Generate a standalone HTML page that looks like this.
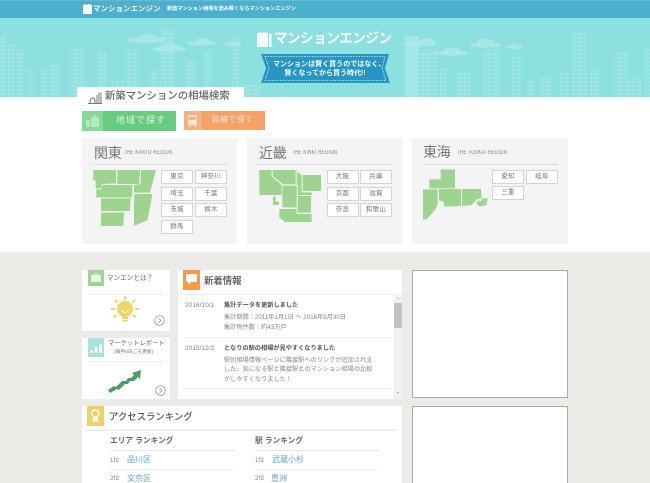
<!DOCTYPE html>
<html lang="ja"><head><meta charset="utf-8"><title>マンションエンジン</title>
<style>
html,body{margin:0;padding:0;background:#ecebe7;width:650px;height:483px;overflow:hidden}
body{position:relative;font-family:"Liberation Sans","Noto Sans CJK JP",sans-serif;color:#666}
#p{position:absolute;left:0;top:0;width:650px;height:483px;overflow:hidden;filter:blur(.3px)}
.a{position:absolute;white-space:nowrap}
.t{position:absolute;white-space:nowrap;line-height:1}
.panel{position:absolute;background:#f4f4f4;top:138px;height:106px;width:155px}
.pb{position:absolute;box-sizing:border-box;width:32px;height:14px;background:#fff;border:1px solid #d4d4d4;font-size:6.5px;line-height:12px;text-align:center;color:#777;letter-spacing:.3px}
.reg{position:absolute;font-size:14px;line-height:1;color:#777;white-space:nowrap;letter-spacing:-.2px}
.en{position:absolute;font-size:6px;line-height:1;color:#777;white-space:nowrap;letter-spacing:.75px;transform-origin:left top;transform:scaleX(.68)}
.dot{position:absolute;height:0;border-top:1px dotted #ccc}
.card{position:absolute;background:#fff}
.ln{position:absolute;height:1px;background:#eee}
.n{font-size:6.2px;color:#888}
.nb{font-size:6.2px;color:#555;font-weight:bold}
.r{font-size:8px;color:#5ea9c6}
.o{font-size:6px;color:#888}
.h{font-size:7.7px;font-weight:bold;color:#666}
</style></head><body><div id="p">
<div class="a" style="left:0;top:0;width:650px;height:18px;background:#4bafce;border-top:1px solid #69b7d0;box-sizing:border-box"></div>
<svg class="a" style="left:83px;top:4px" width="9" height="10" viewBox="0 0 9 10"><path d="M0 1l3-1 1 1 2-1 3 1v9H0z" fill="#fff"/></svg>
<div class="t" style="left:93px;top:4.5px;font-size:7.5px;font-weight:bold;color:#fff">マンションエンジン</div>
<div class="t" style="left:167px;top:6.5px;font-size:5.16px;font-weight:bold;color:#fff">新築マンション相場を読み解くならマンションエンジン</div>

<div class="a" style="left:0;top:18px;width:650px;height:79px;background:#8de0e0"></div>
<svg class="a" style="left:0;top:18px" width="650" height="79" viewBox="0 18 650 79">
<defs><pattern id="w" width="6" height="4" patternUnits="userSpaceOnUse"><rect width="6" height="4" fill="#93e2e2"/><rect x="1" y="1" width="4" height="2" fill="#9fe6e5"/></pattern></defs>
<g fill="url(#w)">
<rect x="0" y="36" width="6" height="61"/><rect x="8" y="44" width="7" height="53"/><rect x="16" y="50" width="9" height="47"/><rect x="27" y="68" width="6" height="29"/><rect x="40" y="70" width="8" height="27"/><rect x="50" y="65" width="11" height="32"/><rect x="70" y="47" width="15" height="50"/><rect x="98" y="52" width="8" height="45"/><rect x="112" y="80" width="12" height="17"/><rect x="126" y="50" width="12" height="47"/><rect x="150" y="70" width="8" height="27"/><rect x="160" y="30" width="14" height="67"/><rect x="186" y="60" width="9" height="37"/><rect x="203" y="50" width="9" height="47"/><rect x="232" y="37" width="8" height="60"/><rect x="244" y="85" width="16" height="12"/>
<rect x="405" y="36" width="14" height="61"/><rect x="420" y="50" width="17" height="47"/><rect x="440" y="68" width="7" height="29"/><rect x="455" y="72" width="16" height="25"/><rect x="483" y="50" width="17" height="47"/><rect x="512" y="55" width="9" height="42"/><rect x="527" y="80" width="8" height="17"/><rect x="540" y="78" width="13" height="19"/><rect x="560" y="72" width="9" height="25"/><rect x="572" y="32" width="15" height="65"/><rect x="590" y="70" width="10" height="27"/><rect x="615" y="52" width="13" height="45"/><rect x="628" y="78" width="14" height="19"/><rect x="645" y="47" width="5" height="50"/>
</g>
<g fill="#aee9e9" opacity=".85">
<ellipse cx="146" cy="40" rx="20" ry="3"/><ellipse cx="148" cy="37.500" rx="8" ry="3.500"/>
<ellipse cx="169" cy="49" rx="17" ry="3"/><ellipse cx="170" cy="47" rx="8" ry="3.500"/>
<ellipse cx="202" cy="43" rx="15" ry="2.500"/><ellipse cx="203" cy="41" rx="7" ry="3"/>
<ellipse cx="233" cy="44" rx="9" ry="1.800"/><ellipse cx="233" cy="43" rx="4" ry="2"/>
<ellipse cx="420" cy="44" rx="17" ry="2.500"/><ellipse cx="427" cy="42" rx="8" ry="4"/>
<ellipse cx="451" cy="53" rx="17" ry="2.500"/><ellipse cx="452" cy="51" rx="8" ry="3.500"/>
<ellipse cx="485" cy="45" rx="16" ry="2.500"/><ellipse cx="486" cy="43" rx="9" ry="4"/>
<ellipse cx="514" cy="47" rx="9" ry="1.800"/><ellipse cx="514" cy="46" rx="4" ry="2"/>
</g>
<rect x="405" y="36" width="14" height="61" fill="#c0eeee" opacity=".3"/>
</svg>

<svg class="a" style="left:257px;top:32px" width="15" height="15" viewBox="0 0 15 15"><path d="M0 1.500l3-1.200 2 .7 2.500-1 2.500 1 1.500-.5v1.500H14.500V15H0z" fill="#f4fbfb"/><rect x="11" y="2" width="1" height="13" fill="#8de0e0"/></svg>
<div class="t" style="left:274px;top:31px;font-size:14px;font-weight:bold;color:#fff;letter-spacing:-.55px;transform-origin:left top;transform:scaleX(.97)">マンションエンジン</div>

<svg class="a" style="left:260px;top:54px" width="130" height="30" viewBox="0 0 130 30"><path d="M1 0H129l-4 14 5 15H1l5-15z" fill="#2696c6"/><path d="M5 2.500H125l-3 11.500 4 12.500H5l4-12.500z" fill="none" stroke="#dff3f8" stroke-width=".8" stroke-dasharray="1.400 1.200"/></svg>
<div class="t" style="left:273px;top:60.5px;font-size:7px;font-weight:bold;color:#fff;letter-spacing:.02px;width:104px;text-align:center">マンションは賢く買うのではなく、</div>
<div class="t" style="left:273px;top:69.5px;font-size:7px;font-weight:bold;color:#fff;width:104px;text-align:center">賢くなってから買う時代!!</div>

<div class="a" style="left:0;top:97px;width:650px;height:155px;background:#fff"></div>
<div class="a" style="left:77px;top:87px;width:167px;height:12px;background:#fff"></div>
<svg class="a" style="left:88px;top:91px" width="14" height="13" viewBox="0 0 14 13" fill="none" stroke="#777" stroke-width="1"><path d="M0 12.500h14M2 12c0-3 1-5 3-5s2 2 2 5M9 12V4M11 12V1.500M13 12V1.500"/></svg>
<div class="t" style="left:105px;top:91.5px;font-size:10.4px;color:#666;font-weight:500">新築マンションの相場検索</div>

<div class="a" style="left:82px;top:111px;width:94px;height:20px;background:#66cc7e"></div>
<div class="a" style="left:82px;top:111px;width:21px;height:20px;background:#86d898"></div>
<svg class="a" style="left:86px;top:115px" width="13" height="12" viewBox="0 0 13 12" fill="#b5e9bd"><path d="M0 5h4v7H0zM5 2h3V0h2v2h3v10H5z"/></svg>
<div class="t" style="left:116px;top:116px;font-size:9px;color:#e2f6e5;letter-spacing:1px">地域で探す</div>
<div class="a" style="left:184px;top:111px;width:81px;height:18.5px;background:#f5a368"></div>
<div class="a" style="left:184px;top:111px;width:18px;height:18.5px;background:#f7b080"></div>
<svg class="a" style="left:188px;top:114.5px" width="9" height="12" viewBox="0 0 9 12" fill="#fde6d2"><path d="M1 0h7a1 1 0 0 1 1 1v8a1 1 0 0 1-1 1H1a1 1 0 0 1-1-1V1a1 1 0 0 1 1-1zM1 2v3h7V2zM1.500 10h1.500L2 12H1zM6 10h1.500L8 12H7z"/></svg>
<div class="t" style="left:212px;top:116px;font-size:7.7px;color:#fbe3d0;letter-spacing:.6px">路線で探す</div>

<div class="panel" style="left:82px"></div>
<div class="panel" style="left:247px"></div>
<div class="panel" style="left:412px;width:156px"></div>
<div class="reg" style="left:94px;top:145.500px">関東</div>
<div class="en" style="left:124px;top:150px">THE KANTO REGION</div>
<div class="dot" style="left:92px;top:164px;width:135px"></div>
<div class="reg" style="left:259px;top:145.500px">近畿</div>
<div class="en" style="left:292px;top:150px">THE KINKI REGION</div>
<div class="dot" style="left:257px;top:164px;width:135px"></div>
<div class="reg" style="left:423px;top:145px">東海</div>
<div class="en" style="left:457px;top:149.500px">THE TOUKAI REGION</div>
<div class="dot" style="left:423px;top:163.500px;width:134px"></div>

<div class="pb" style="left:161px;top:170px">東京</div><div class="pb" style="left:195px;top:170px">神奈川</div>
<div class="pb" style="left:161px;top:186.500px">埼玉</div><div class="pb" style="left:195px;top:186.500px">千葉</div>
<div class="pb" style="left:161px;top:203px">茨城</div><div class="pb" style="left:195px;top:203px">栃木</div>
<div class="pb" style="left:161px;top:219.500px">群馬</div>
<div class="pb" style="left:326.500px;top:170px">大阪</div><div class="pb" style="left:360px;top:170px">兵庫</div>
<div class="pb" style="left:326.500px;top:186.500px">京都</div><div class="pb" style="left:360px;top:186.500px">滋賀</div>
<div class="pb" style="left:326.500px;top:203px">奈良</div><div class="pb" style="left:360px;top:203px">和歌山</div>
<div class="pb" style="left:492px;top:169.500px">愛知</div><div class="pb" style="left:526px;top:169.500px">岐阜</div>
<div class="pb" style="left:492px;top:186px">三重</div>

<svg class="a" style="left:0;top:0;pointer-events:none" width="650" height="260" viewBox="0 0 650 260">
<g fill="#9dd48f" transform="translate(75 130) scale(.33333)">
<path d="M55 120H123V160L80 162V175H62V152H55z"/><path d="M127 120H195L193 162H127z"/><path d="M198 120H243L225 188H177V165L197 162z"/><path d="M64 178H80L83 165H172V202H64z"/><path d="M78 205H167L165 243H78z"/><path d="M178 192H232L218 270L177 288V225z"/><path d="M78 248L147 247L145 288L78 288z"/>
<path d="M553 120H590V140L620 165V195H553z"/><path d="M593 120H662V163H625L593 138z"/><path d="M683 135H738V183H683z"/><path d="M665 122V165H668V195H710V187H680V135L662 122z"/><path d="M622 167H665V232H622z"/><path d="M668 198H708V248H668z"/><path d="M613 237H665V252H710V276H630L613 262z"/><path d="M594 200H602V215H612V225H594z"/>
</g>
<g fill="#9dd48f" transform="translate(325 130) scale(.33333)">
<path d="M347 118H390V175H313V148H347z"/><path d="M294 178H338V222L330 240L305 268H294z"/><path d="M342 177H408V228L358 230L355 215L342 212z"/><path d="M411 177H468L470 205L455 208L440 225L411 228z"/><path d="M470 205H488L485 225L465 230L455 222L458 212L470 213z"/>
</g>
</svg>

<div class="card" style="left:82px;top:270px;width:88px;height:61px"></div>
<div class="a" style="left:88px;top:270px;width:16px;height:16px;background:#9dd48f"></div>
<svg class="a" style="left:91px;top:273px" width="10" height="10" viewBox="0 0 10 10" fill="#e9f7e5"><path d="M3 2V.5h4V2h3v7H0V2zM4 1.300V2h2v-.7z"/></svg>
<div class="t" style="left:107px;top:275.500px;font-size:6.6px;color:#666">マンエンとは？</div>
<div class="ln" style="left:87px;top:294px;width:77px"></div>
<svg class="a" style="left:110px;top:296px" width="30" height="29" viewBox="0 0 30 29"><g stroke="#f2d366" stroke-width="2" stroke-linecap="round"><path d="M15 1v2M5.500 4.500l1.500 1.500M24.500 4.500L23 6M1.500 13h2.500M26 13h2.500M4.500 21l1.500-1.500M25 21l-1.500-1.500"/></g><circle cx="15" cy="13" r="8" fill="#f2d366"/><path d="M11 14l4 3 4-3" stroke="#fff" fill="none" stroke-width="1"/><rect x="12" y="21" width="6" height="2" fill="#f2d366"/><rect x="12.500" y="24" width="5" height="1.500" fill="#f2d366"/></svg>
<svg class="a" style="left:154px;top:315px" width="11" height="11" viewBox="0 0 11 11" fill="none" stroke="#888"><circle cx="5.500" cy="5.500" r="4.800" stroke-width=".7"/><path d="M4.500 3l2.500 2.500L4.500 8" stroke-width=".7"/></svg>

<div class="card" style="left:82px;top:338px;width:88px;height:61px"></div>
<div class="a" style="left:88px;top:338px;width:16px;height:19px;background:#a5e2dc"></div>
<svg class="a" style="left:90px;top:342px" width="12" height="12" viewBox="0 0 12 12" fill="#f0fbfa"><path d="M0 8h3v3H0zM4.500 5h3v6h-3zM9 2h3v9H9z"/></svg>
<div class="t" style="left:108px;top:341px;font-size:6.3px;color:#666">マーケットレポート</div>
<div class="t" style="left:114px;top:351px;font-size:4.800px;color:#777">(毎月6日ごろ更新)</div>
<div class="ln" style="left:87px;top:361px;width:77px"></div>
<svg class="a" style="left:107px;top:368px" width="34" height="26" viewBox="0 0 34 26"><path d="M1 22l6-4 2 1 6-6h4l2-3h3l3-3-2-2 9-3-1 9-2-2-4 4h-4l-2 3h-3l-6 6-2-1-7 4z" fill="#4e9c67"/></svg>
<svg class="a" style="left:155px;top:385px" width="11" height="11" viewBox="0 0 11 11" fill="none" stroke="#888"><circle cx="5.500" cy="5.500" r="4.800" stroke-width=".7"/><path d="M4.500 3l2.500 2.500L4.500 8" stroke-width=".7"/></svg>

<div class="card" style="left:178px;top:270px;width:224px;height:129px"></div>
<div class="a" style="left:183px;top:270px;width:17px;height:20px;background:#f59b48"></div>
<svg class="a" style="left:186px;top:274px" width="11" height="11" viewBox="0 0 11 11" fill="#fff"><path d="M1 0h9a1 1 0 0 1 1 1v6a1 1 0 0 1-1 1H5L2.500 10.500V8H1a1 1 0 0 1-1-1V1a1 1 0 0 1 1-1z"/></svg>
<div class="t" style="left:204px;top:276px;font-size:9.4px;font-weight:bold;color:#666">新着情報</div>
<div class="ln" style="left:183px;top:294px;width:215px"></div>
<div class="t" style="left:185px;top:303px;font-size:6.6px;color:#888">2016/10/1</div>
<div class="t nb" style="left:224px;top:303px">集計データを更新しました</div>
<div class="t n" style="left:224px;top:314.500px">集計期間：2011年1月1日 ～ 2016年9月30日</div>
<div class="t n" style="left:224px;top:324.500px">集計物件数：約43万戸</div>
<div class="ln" style="left:183px;top:337px;width:208px"></div>
<div class="t" style="left:185px;top:345.500px;font-size:6.6px;color:#888">2015/12/2</div>
<div class="t nb" style="left:224px;top:345.500px">となりの駅の相場が見やすくなりました</div>
<div class="t n" style="left:224px;top:357.500px">駅別相場情報ページに隣接駅へのリンクが追加されま</div>
<div class="t n" style="left:224px;top:367px">した。気になる駅と隣接駅とのマンション相場の比較</div>
<div class="t n" style="left:224px;top:376.500px">がしやすくなりました！</div>
<div class="ln" style="left:183px;top:388px;width:208px"></div>
<div class="a" style="left:394px;top:294px;width:8px;height:105px;background:#f1f1f1"></div>
<div class="a" style="left:394px;top:303px;width:8px;height:25px;background:#c1c1c1"></div>
<div class="a" style="left:396.500px;top:298px;width:0;height:0;border:1.500px solid transparent;border-bottom-color:#888;border-top:0"></div>
<div class="a" style="left:396.500px;top:392px;width:0;height:0;border:1.500px solid transparent;border-top-color:#555;border-bottom:0"></div>

<div class="a" style="left:412px;top:270px;width:156px;height:128px;box-sizing:border-box;background:#fff;border:1px solid #aaa"></div>
<div class="a" style="left:412px;top:406px;width:156px;height:77px;box-sizing:border-box;background:#fff;border:1px solid #aaa;border-bottom:0"></div>

<div class="card" style="left:82px;top:406px;width:320px;height:77px"></div>
<div class="a" style="left:87px;top:406px;width:17px;height:20px;background:#f2d067"></div>
<svg class="a" style="left:91px;top:409px" width="9" height="14" viewBox="0 0 9 14"><circle cx="4.500" cy="4.500" r="3.500" fill="none" stroke="#fff" stroke-width="1.500"/><path d="M2 8l-.5 5.500 3-1.500 3 1.500L7 8z" fill="#fff"/></svg>
<div class="t" style="left:109px;top:412px;font-size:9.4px;color:#555;font-weight:500">アクセスランキング</div>
<div class="ln" style="left:87px;top:429px;width:310px;height:2px"></div>
<div class="t h" style="left:110px;top:437px">エリア ランキング</div>
<div class="t h" style="left:255px;top:437px">駅 ランキング</div>
<div class="ln" style="left:110px;top:450px;width:125px;background:#e6e6e6"></div>
<div class="ln" style="left:255px;top:450px;width:124px;background:#e6e6e6"></div>
<div class="t o" style="left:110px;top:457.500px">1位</div><div class="t r" style="left:127px;top:456px">品川区</div>
<div class="t o" style="left:255px;top:457.500px">1位</div><div class="t r" style="left:272px;top:456px">武蔵小杉</div>
<div class="ln" style="left:110px;top:469px;width:125px"></div>
<div class="ln" style="left:255px;top:469px;width:124px"></div>
<div class="t o" style="left:110px;top:476px">2位</div><div class="t r" style="left:127px;top:474.500px">文京区</div>
<div class="t o" style="left:255px;top:476px">2位</div><div class="t r" style="left:271px;top:474.500px">豊洲</div>
</div></body></html>
